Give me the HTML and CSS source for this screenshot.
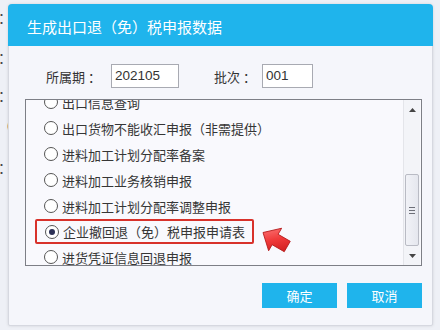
FILE: index.html
```html
<!DOCTYPE html>
<html lang="zh-CN">
<head>
<meta charset="utf-8">
<link rel="stylesheet" href="styles.css">
</head>
<body>
<div class="page">
  <div class="bg-col">
    <div class="bg-line l1">类：</div>
    <div class="bg-line l2">日：</div>
    <div class="bg-line l3">日：</div>
    <div class="bg-line l4">览（</div>
    <div class="bg-line l5">日：</div>
  </div>

  <div class="dialog">
    <div class="titlebar">生成出口退（免）税申报数据</div>
    <div class="dlg-body">
      <div class="form-row">
        <span class="label lbl-period">所属期 ：</span>
        <span class="input in-period">202105</span>
        <span class="label lbl-batch">批次 ：</span>
        <span class="input in-batch">001</span>
      </div>

      <div class="listbox">
        <div class="list-view">
          <ul class="list">
            <li class="item"><span class="radio"></span>出口信息查询</li>
            <li class="item"><span class="radio"></span>出口货物不能收汇申报（非需提供）</li>
            <li class="item"><span class="radio"></span>进料加工计划分配率备案</li>
            <li class="item"><span class="radio"></span>进料加工业务核销申报</li>
            <li class="item"><span class="radio"></span>进料加工计划分配率调整申报</li>
            <li class="item selected"><span class="radio checked"></span>企业撤回退（免）税申报申请表</li>
            <li class="item"><span class="radio"></span>进货凭证信息回退申报</li>
          </ul>
        </div>
        <div class="scrollbar">
          <div class="sb-arrow up">
            <svg width="7" height="4" viewBox="0 0 7 4"><path d="M0 4 L3.5 0 L7 4 Z" fill="#444"/></svg>
          </div>
          <div class="sb-track">
            <div class="sb-thumb">
              <span class="grip"></span><span class="grip"></span><span class="grip"></span>
            </div>
          </div>
          <div class="sb-arrow down">
            <svg width="7" height="4" viewBox="0 0 7 4"><path d="M0 0 L7 0 L3.5 4 Z" fill="#444"/></svg>
          </div>
        </div>
        <svg class="pointer" width="32" height="30" viewBox="0 0 32 30">
          <defs>
            <linearGradient id="ag" x1="0" y1="0" x2="1" y2="1">
              <stop offset="0" stop-color="#ff8a8a"/>
              <stop offset="0.5" stop-color="#f03a3a"/>
              <stop offset="1" stop-color="#c41414"/>
            </linearGradient>
          </defs>
          <g transform="rotate(30 16 15)">
            <path d="M1 15 L15 2 L15 9 L29 9 L29 21 L15 21 L15 28 Z" fill="url(#ag)" stroke="#b51a1a" stroke-width="0.8" stroke-linejoin="round"/>
          </g>
        </svg>
      </div>

      <div class="buttons">
        <span class="btn">确定</span>
        <span class="btn">取消</span>
      </div>
    </div>
  </div>
</div>
</body>
</html>
```

FILE: styles.css
```css
* { box-sizing: border-box; }
html, body { margin: 0; padding: 0; }
body {
  width: 440px;
  height: 330px;
  overflow: hidden;
  background: #eef0f6;
  font-family: "Noto Sans CJK SC", "Noto Sans", sans-serif;
  color: #333;
}
.page {
  position: relative;
  width: 440px;
  height: 330px;
}
.bg-col {
  width: 12px;
  overflow: hidden;
  display: flex;
  flex-direction: column;
  align-items: flex-end;
  font-size: 14px;
  color: #444;
}
.bg-line { white-space: nowrap; line-height: 18px; height: 18px; }
.l1 { margin-top: 8px; }
.l2 { margin-top: 22px; }
.l3 { margin-top: 20px; }
.l4 { margin-top: 12px; }
.l5 { margin-top: 24px; }

.dialog {
  position: absolute;
  left: 8px;
  top: 4px;
  width: 425px;
  height: 322px;
  background: #f5f6fb;
  border: 1px solid #d6d8e0;
  border-radius: 4px 4px 2px 2px;
  box-shadow: 0 0 3px rgba(0,0,0,0.12);
  display: flex;
  flex-direction: column;
}
.titlebar {
  height: 42px;
  margin: -1px -1px 0 -1px;
  background: #1fb4ec;
  border-radius: 4px 4px 0 0;
  color: #fff;
  font-size: 15px;
  line-height: 42px;
  padding-top: 2px;
  padding-left: 19px;
}
.dlg-body {
  padding: 18px 10px 0 16px;
  display: flex;
  flex-direction: column;
}
.form-row {
  display: flex;
  align-items: center;
  height: 24px;
  font-size: 13px;
}
.label { color: #333; white-space: nowrap; }
.lbl-period { margin-left: 21px; width: 65px; }
.lbl-batch { margin-left: 35px; width: 48px; }
.input {
  height: 24px;
  line-height: 22px;
  border: 1px solid #a8aab2;
  background: #fff;
  padding-left: 3px;
  font-family: "Liberation Sans", sans-serif;
  font-size: 13.5px;
  color: #333;
}
.in-period { width: 68px; }
.in-batch { width: 51px; }

.listbox {
  position: relative;
  margin-top: 11px;
  width: 397px;
  height: 167px;
  border: 1px solid #7d7f86;
  background: #f9f9fd;
  display: flex;
}
.list-view {
  flex: 1;
  overflow: hidden;
}
.list {
  list-style: none;
  margin: -11px 0 0 0;
  padding: 0;
}
.item {
  height: 26px;
  display: flex;
  align-items: center;
  padding-left: 18px;
  font-size: 13px;
  color: #363636;
  white-space: nowrap;
}
.radio {
  width: 14px;
  height: 14px;
  border: 1px solid #555;
  border-radius: 50%;
  background: #fff;
  margin-right: 4px;
  display: flex;
  align-items: center;
  justify-content: center;
  flex: none;
}
.radio.checked::after {
  content: "";
  width: 6px;
  height: 6px;
  border-radius: 50%;
  background: #2b2f55;
}
.item.selected {
  margin-left: 9px;
  padding-left: 8px;
  width: 219px;
  height: 25px;
  border: 2px solid #d8322b;
  border-radius: 2px;
}

.scrollbar {
  width: 17px;
  margin-right: 1px;
  background: #f3f4f8;
  border-left: 1px solid #e4e5ea;
  display: flex;
  flex-direction: column;
}
.sb-arrow {
  height: 18px;
  display: flex;
  align-items: center;
  justify-content: center;
}
.sb-arrow.up { padding-top: 2px; }
.sb-track {
  flex: 1;
  padding-top: 56px;
}
.sb-thumb {
  height: 72px;
  margin: 0 1px;
  border: 1px solid #b9bbc4;
  border-radius: 2px;
  background: linear-gradient(to right, #f1f2f7, #e5e7ee);
  display: flex;
  flex-direction: column;
  align-items: center;
  justify-content: center;
  gap: 2px;
}
.grip {
  width: 6px;
  height: 1px;
  background: #6d6f78;
}
.pointer {
  position: absolute;
  left: 234px;
  top: 125px;
}

.buttons {
  display: flex;
  justify-content: flex-end;
  gap: 10px;
  margin-top: 17px;
  width: 397px;
}
.btn {
  width: 75px;
  height: 25px;
  background: #1fb4ec;
  color: #fff;
  font-size: 13px;
  display: flex;
  align-items: center;
  justify-content: center;
}
```
